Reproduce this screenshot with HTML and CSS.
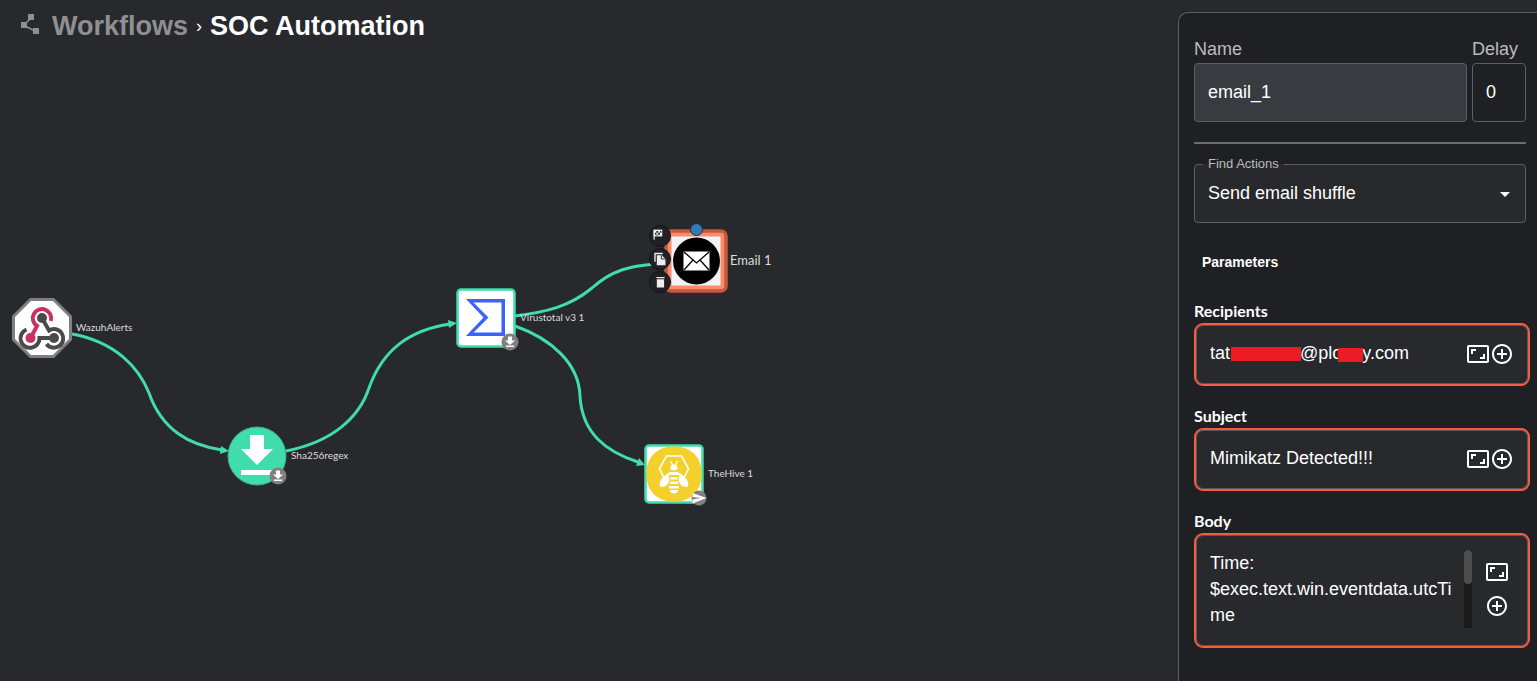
FILE: index.html
```
<!DOCTYPE html>
<html lang="en">
<head>
<meta charset="utf-8">
<title>SOC Automation</title>
<link rel="stylesheet" href="styles.css">
</head>
<body>
<svg class="defs" aria-hidden="true">
  <symbol id="expand" viewBox="0 0 24 24"><path d="M19 12h-2v3h-3v2h5v-5zM7 9h3V7H5v5h2V9zm14-6H3c-1.1 0-2 .9-2 2v14c0 1.1.9 2 2 2h18c1.1 0 2-.9 2-2V5c0-1.1-.9-2-2-2zm0 16.01H3V4.99h18v14.02z"/></symbol>
  <symbol id="add" viewBox="0 0 24 24"><path d="M13 7h-2v4H7v2h4v4h2v-4h4v-2h-4V7zm-1-5C6.48 2 2 6.48 2 12s4.48 10 10 10 10-4.48 10-10S17.52 2 12 2zm0 18c-4.41 0-8-3.59-8-8s3.59-8 8-8 8 3.59 8 8-3.59 8-8 8z"/></symbol>
  <symbol id="download-badge" viewBox="0 0 18 18"><circle cx="9" cy="9" r="8.500" fill="#808080"/><path d="M7 3.500h4v4h3L9 12 4 7.500h3zM5 12.500h8v1.500H5z" fill="#fff"/></symbol>
</svg>
<main class="canvas">
  <nav class="crumbs">
    <svg class="crumb-icon" viewBox="0 0 20 22"><path d="M8 1h6v6H8zM1 9h6v6H1zM13 15h6v6h-6z" fill="#8f9092"/><path d="M10 6 5 11M5 13l10 5" stroke="#8f9092" stroke-width="1.500"/></svg>
    <a class="crumb-link" href="#">Workflows</a>
    <span class="crumb-sep">›</span>
    <h1 class="crumb-title">SOC Automation</h1>
  </nav>

  <svg class="edges" fill="none" stroke="#41dcab" stroke-width="3">
    <path d="M72 334C116 342 139 368 149 393C162 430 189 445 222 450"/>
    <path d="M286 451C332 442 359 418 369 388C383 349 410 330 450 324"/>
    <path d="M515 316C546 312 569 307 592 288C612 270 630 266 656 264"/>
    <path d="M515 326C552 339 579 364 580 396C582 434 607 452 638 462"/>
    <g fill="#41dcab" stroke="none">
      <path d="M229 451l-9 3 1-8z"/><path d="M457 323l-8 5-1-8z"/><path d="M645 465l-9 1 3-8z"/>
    </g>
  </svg>

  <div class="node webhook">
    <svg class="shape" viewBox="0 0 60 60">
      <path d="M18.500 1.500h23l17 17v23l-17 17h-23l-17-17v-23z" fill="#fff" stroke="#808080" stroke-width="3" stroke-linejoin="round"/>
      <g fill="none" stroke-width="4">
        <path d="M38.800 23A9.200 9.200 0 1 0 25 28L18.500 40" stroke="#ca3162"/>
        <path d="M14.500 31.500A9.500 9.500 0 1 0 27.500 40H41" stroke="#4a4a4a"/>
        <path d="M30 20l7 12.500A9.300 9.300 0 1 1 34.500 46" stroke="#4a4a4a"/>
      </g>
      <circle cx="18.500" cy="40" r="5" fill="#ca3162"/><circle cx="30" cy="20" r="5" fill="#4a4a4a"/><circle cx="42" cy="40" r="5" fill="#4a4a4a"/>
    </svg>
    <span class="node-label">WazuhAlerts</span>
  </div>

  <div class="node regex">
    <svg class="shape" viewBox="0 0 60 60">
      <circle cx="30" cy="30" r="29" fill="#41dcab" stroke="#38b48e"/>
      <path d="M23 9h14v14h9L30 39 14 23h9zM14 44h31v5H14z" fill="#fff"/>
    </svg>
    <svg class="badge badge-regex"><use href="#download-badge"/></svg>
    <span class="node-label">Sha256regex</span>
  </div>

  <div class="node virustotal">
    <svg class="shape" viewBox="0 0 60 60">
      <rect x="1.500" y="1.500" width="57" height="57" rx="3.500" fill="#fff" stroke="#41dcab" stroke-width="2.500"/>
      <path fill-rule="evenodd" d="M10 11h39V48H10L27.500 29.500zM17.500 14.500L32.500 29.500 17.500 44.500H45.500V14.500z" fill="#3b61ff"/>
    </svg>
    <svg class="badge badge-virustotal"><use href="#download-badge"/></svg>
    <span class="node-label">Virustotal v3 1</span>
  </div>

  <div class="node hive">
    <svg class="shape" viewBox="0 0 60 60">
      <rect x="1.500" y="1.500" width="57" height="57" rx="3.500" fill="#fff" stroke="#41dcab" stroke-width="2.500"/>
      <rect x="2.500" y="2.500" width="55" height="55" rx="25" fill="#f3d02b"/>
      <path d="M19.500 33l-4-8.500L22.500 12h15L44.500 24.500 40.500 33" fill="none" stroke="#fff" stroke-width="1.600"/>
      <g fill="#fff">
        <path d="M26.500 24a3.500 3.500 0 0 1 7 0c2 3-9 3-7 0z"/>
        <path d="M25.500 28h9l2 3h-13z"/>
        <path d="M24.500 29C18 33 14.500 38 16 42.500c4 1.500 8-1 9.500-6zM35.500 29c6.500 4 10 9 8.500 13.500-4 1.500-8-1-9.500-6z"/>
        <path d="M26.500 33h7v2.500h-7zM26 37.500h8V40h-8zM25 42h10v2.500H25zM25.500 46h9q-1.500 3.500-4.500 3.500T25.500 46z"/>
      </g>
      <path d="M28.500 21l-2-4M31.500 21l2-4" stroke="#fff" stroke-width="1.300"/>
    </svg>
    <svg class="badge badge-hive" viewBox="0 0 18 18"><circle cx="9" cy="9" r="7.500" fill="#808080"/><path d="M2.500 4l14 5-14 5.500v-4L11 9 2.500 8z" fill="#fff"/></svg>
    <span class="node-label">TheHive 1</span>
  </div>

  <div class="node email">
    <svg class="shape shape-email" viewBox="0 0 64 64">
      <rect x="2" y="2" width="60" height="60" rx="5" fill="#fa8c6d" stroke="#c4583b" stroke-width="3.500"/>
      <path d="M7.500 7.500h49v49h-49z" fill="#f3f3f3"/>
      <circle cx="32.500" cy="32" r="23.500"/>
      <path d="M19.500 22.500h26v19h-26z" fill="#fff"/>
      <path d="M20 23L32.500 34 45 23M20 41l9-10M45 41l-9-10" fill="none" stroke="#000" stroke-width="1.300"/>
    </svg>
    <span class="port"></span>
    <div class="node-tools">
      <button class="tool" aria-label="Set as start"><svg class="tool-icon" viewBox="0 0 22 22"><path d="M4.500 4v11" stroke="#eee" stroke-width="1.300"/><path d="M4 4h9.500v7.500H4z" fill="#eee"/><path d="M7 5.500h2v2H7zM11 5.500h1.500v2H11zM9 7.500h2v2H9zM5.500 7.500H7v2H5.500zM7 9.500h2v1H7z" fill="#26262a"/></svg></button>
      <button class="tool" aria-label="Copy"><svg class="tool-icon" viewBox="0 0 22 22"><path d="M5.500 14V5H14" fill="none" stroke="#eee" stroke-width="1.500"/><path d="M7.500 7h5.500l4 4v7H7.500z" fill="#eee"/><path d="M12.500 7v4H17" fill="none" stroke="#26262a"/></svg></button>
      <button class="tool" aria-label="Delete"><svg class="tool-icon" viewBox="0 0 22 22"><path d="M7 5.500h9V7H7zM7.500 8h8v9h-8z" fill="#eee"/></svg></button>
    </div>
    <span class="node-label node-label-lg">Email 1</span>
  </div>
</main>

<aside class="panel">
  <div class="name-row">
    <div class="name-field">
      <label class="top-label" for="name">Name</label>
      <input class="box-input box-input-filled" id="name" value="email_1">
    </div>
    <div class="delay-field">
      <label class="top-label" for="delay">Delay</label>
      <input class="box-input" id="delay" value="0">
    </div>
  </div>
  <hr class="divider">
  <fieldset class="action-field">
    <legend class="action-legend"><label for="action">Find Actions</label></legend>
    <select class="action-select" id="action"><option>Send email shuffle</option></select>
    <svg class="caret" viewBox="0 0 10 5"><path d="M0 0h10L5 5z" fill="#fff"/></svg>
  </fieldset>
  <h2 class="section-title">Parameters</h2>

  <div class="param">
    <label class="param-label" for="recipients">Recipients</label>
    <div class="param-box">
      <input class="param-input" id="recipients" value="tat&nbsp;&nbsp;&nbsp;&nbsp;&nbsp;&nbsp;&nbsp;&nbsp;&nbsp;&nbsp;&nbsp;&nbsp;&nbsp;&nbsp;@plo&nbsp;&nbsp;&nbsp;&nbsp;y.com">
      <span class="redact redact-user"></span><span class="redact redact-domain"></span>
      <button class="icon-btn" aria-label="Expand"><svg class="icon"><use href="#expand"/></svg></button>
      <button class="icon-btn" aria-label="Add"><svg class="icon"><use href="#add"/></svg></button>
    </div>
  </div>
  <div class="param">
    <label class="param-label" for="subject">Subject</label>
    <div class="param-box">
      <input class="param-input" id="subject" value="Mimikatz Detected!!!">
      <button class="icon-btn" aria-label="Expand"><svg class="icon"><use href="#expand"/></svg></button>
      <button class="icon-btn" aria-label="Add"><svg class="icon"><use href="#add"/></svg></button>
    </div>
  </div>
  <div class="param">
    <label class="param-label" for="body">Body</label>
    <div class="param-box param-box-tall">
      <textarea class="param-text" id="body" rows="3">Time: $exec.text.win.eventdata.utcTime</textarea>
      <span class="scroll"><span class="scroll-thumb"></span></span>
      <div class="icon-col">
        <button class="icon-btn" aria-label="Expand"><svg class="icon"><use href="#expand"/></svg></button>
        <button class="icon-btn" aria-label="Add"><svg class="icon"><use href="#add"/></svg></button>
      </div>
    </div>
  </div>
</aside>
</body>
</html>
```
FILE: styles.css
```
* { box-sizing: border-box; }

body {
  margin: 0;
  min-height: 100vh;
  display: flex;
  background: #27292d;
  color: #fff;
  font-family: "Liberation Sans", Arial, sans-serif;
  font-size: 18px;
}

input, select, textarea, button {
  font: inherit;
  color: inherit;
  background: none;
  border: 0;
  padding: 0;
  margin: 0;
  outline: 0;
}

.defs { position: absolute; width: 0; height: 0; }

/* Workflow canvas */
.canvas { position: relative; flex: 1; min-width: 0; overflow: hidden; }

.crumbs {
  display: flex;
  align-items: center;
  padding: 10px 20px;
  line-height: 32px;
}
.crumb-icon { width: 20px; height: 22px; margin: 0 12px 4px 0; }
.crumb-link { color: #8f9092; font-size: 27px; font-weight: 700; text-decoration: none; }
.crumb-sep { margin: 0 8px; font-size: 18px; }
.crumb-title { margin: 0; font-size: 27px; font-weight: 700; }

.edges { position: absolute; inset: 0; width: 100%; height: 100%; }

.node { position: absolute; display: flex; align-items: center; gap: 4px; }
.webhook { left: 12px; top: 298px; }
.regex { left: 227px; top: 426px; }
.virustotal { left: 456px; top: 288px; }
.hive { left: 644px; top: 444px; }
.email { left: 664px; top: 229px; gap: 2px; }
.shape { width: 60px; height: 60px; }
.shape-email { width: 64px; height: 64px; }
.node-label {
  color: #dcdcdc;
  font-family: Lato, "Open Sans", sans-serif;
  font-size: 10px;
  line-height: 12px;
  padding-bottom: 2px;
  white-space: nowrap;
}
.node-label-lg { font-size: 13px; line-height: 16px; }

.badge { position: absolute; width: 18px; height: 18px; }
.badge-regex { left: 42px; top: 41px; }
.badge-virustotal { left: 45px; top: 45px; }
.badge-hive { left: 46px; top: 45px; }

.port {
  position: absolute;
  left: 26px;
  top: -6px;
  width: 13px;
  height: 13px;
  border: 1px solid #1d2a38;
  border-radius: 50%;
  background: #337ab7;
}
.node-tools { position: absolute; left: -15px; top: -4px; display: grid; gap: 1px; }
.tool {
  width: 22px;
  height: 22px;
  border: 1px solid #141416;
  border-radius: 50%;
  background: #212125;
}
.tool-icon { display: block; width: 20px; height: 20px; }

/* Side panel */
.panel {
  width: 359px;
  margin-top: 12px;
  padding: 22px 10px 32px 15px;
  border: solid #5c5f63;
  border-width: 1px 0 0 1px;
  border-top-left-radius: 10px;
  background: #1f2023;
}

.name-row { display: flex; gap: 5px; padding-right: 1px; }
.name-field { flex: 1; }
.delay-field { width: 54px; }
.top-label { display: block; line-height: 28px; color: #bcbcbd; }
.box-input {
  display: block;
  width: 100%;
  height: 59px;
  padding: 0 13px;
  border: 1px solid #5c5f63;
  border-radius: 4px;
}
.box-input-filled { background: #383b40; }

.divider { height: 2px; margin: 20px 1px 13px 0; border: 0; background: #6b6d70; }

.action-field {
  position: relative;
  margin: 0 1px 0 0;
  padding: 0;
  border: 1px solid #5c5f63;
  border-radius: 4px;
  background: #27292d;
}
.action-legend {
  margin-left: 8px;
  padding: 0 5px;
  color: #bcbcbd;
  font-size: 13px;
  line-height: 14px;
}
.action-select {
  display: block;
  width: 100%;
  height: 51px;
  padding: 0 13px 8px;
  appearance: none;
}
.caret { position: absolute; right: 15px; top: 21px; width: 10px; height: 5px; pointer-events: none; }

.section-title { margin: 29px 8px; font-size: 14px; line-height: 20px; }

.param { margin: 0 -3px 20px 0; }
.param-label {
  display: block;
  margin-bottom: 2px;
  font-family: Lato, sans-serif;
  font-size: 16px;
  font-weight: 700;
  line-height: 20px;
}
.param-box {
  position: relative;
  display: flex;
  align-items: center;
  height: 63px;
  padding: 0 14px 2px;
  border: 2px solid #f85a3e;
  border-radius: 9px;
  background: #27292d;
  box-shadow: inset 0 0 0 1px #55575b;
}
.param-input { flex: 1; min-width: 0; height: 26px; }
.icon-btn { width: 24px; height: 24px; }
.icon { display: block; width: 24px; height: 24px; fill: #fff; }

.redact { position: absolute; height: 14px; background: #ed1c24; }
.redact-user { left: 35px; top: 22px; width: 70px; }
.redact-domain { left: 142px; top: 23px; width: 25px; }

.param-box-tall { height: auto; padding: 15px 19px 18px 14px; }
.param-text {
  flex: 1;
  min-width: 0;
  height: 78px;
  line-height: 26px;
  resize: none;
  overflow: hidden;
  overflow-wrap: anywhere;
}
.scroll { width: 8px; height: 78px; margin: 0 13px 0 8px; background: #1a1a1a; }
.scroll-thumb { display: block; height: 34px; border-radius: 4px; background: #4d4d4d; }
.icon-col { display: grid; gap: 10px; }
```
